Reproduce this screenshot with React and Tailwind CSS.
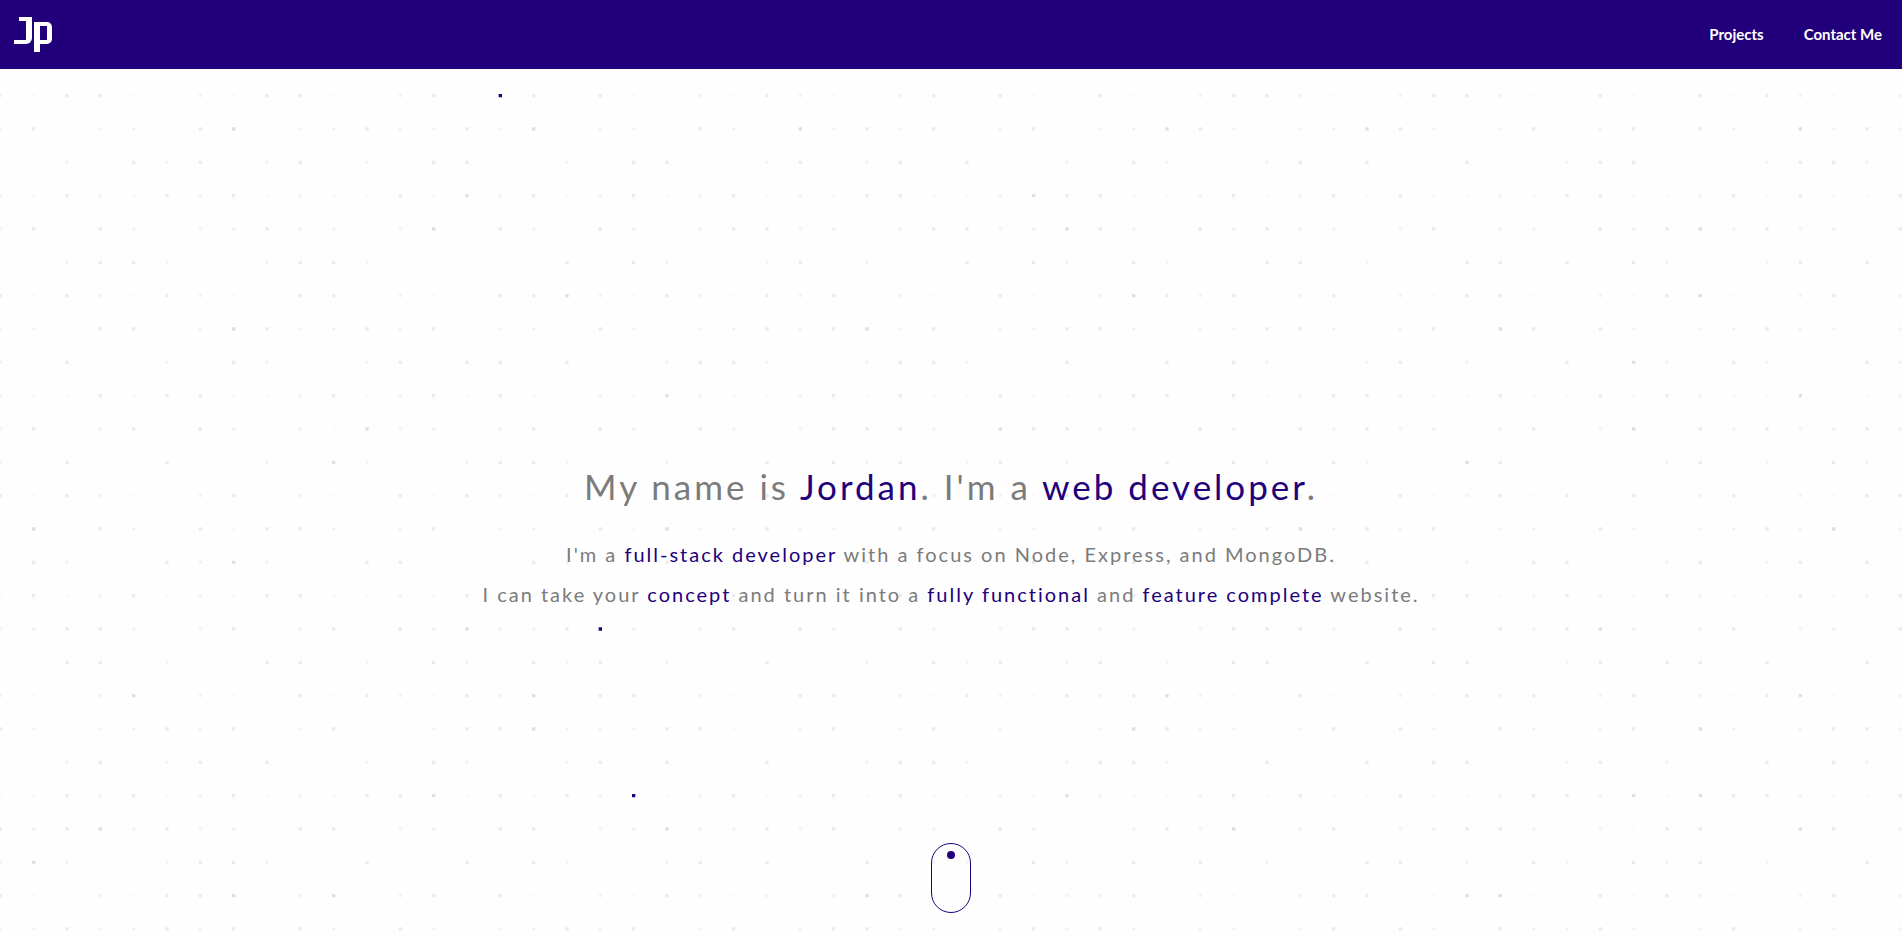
const CELL = 100 / 3;
const DOT = 10 / 3;

// One string per row of the backdrop: 0 is empty, 1-4 are shades of grey, B is an accent dot.
const ROWS = [
  "2133112133112" + "31B3131" + "1213211231311311233" + "2112332113113132112",
  "23022034022322324022" + "0320423230230224320" + "2243202302303204232",
  "00203230230203300203" + "3002302303002032002" + "3030030023300023320",
  "21321323121131423123" + "1231213311243311231" + "2313112133112313113",
  "23032022322024032032" + "0233220233224320323" + "2202302203234232203",
  "00233200233200000303" + "2002302003032032003" + "3020033030320023030",
  "31321321133121133421" + "3213231211311243231" + "2312133112134112312",
  "22033024322323022032" + "0223234230223320223" + "3202304303202232202",
  "20300203200230330300" + "2332002332003003032" + "0023020030420320032",
  "21131331123123131021" + "4211231311311233031" + "2332113113132114012",
  "23023032021422023032" + "0320233320433220320" + "3232202302403232232",
  "20300300204200233200" + "2003032302302003032" + "0320043000023020320",
  "31321123121131321321" + "1213112321213112311" + "2113123131312312133",
  "14032031332023022031" + "4223220330220330223" + "4232302203202232402",
  "03200324200330003200" + "3200203002030230002" + "0230020330023023030",
  "13123121331121311121" + "1131211311211231211" + "2112331232132113123",
  "223320230230324223B2" + "0230320320233220233" + "3203203234202302203",
  "00330200330203203230" + "2003002032302302033" + "0030330023033030030",
  "21124121131321324133" + "1211331213213234211" + "3112132312312134112",
  "32022323023002334222" + "3310230230200243220" + "2303203202304202332",
  "00230230300203200230" + "3003002332002332003" + "0030330023020030320",
  "1132312312133413132B" + "1231231311214211231" + "3113112332414332113",
  "32342322033022033022" + "4223230220320023240" + "2302233202133004302",
  "24200233200300303200" + "2303003022032030302" + "0033020320323020030",
  "31121334124123131121" + "3212124311312231211" + "2331144113132112312",
  "22322323032032022323" + "0230233220232320220" + "2303203223202302202",
];

const SHADES = [
  ["1", "fill-[#f9f9f9]"],
  ["2", "fill-[#f3f3f3]"],
  ["3", "fill-[#ebebeb]"],
  ["4", "fill-[#e0e0e0]"],
  ["B", "fill-[#22007b]"],
];

function squares(level) {
  let d = "";
  ROWS.forEach((row, r) => {
    [...row].forEach((value, c) => {
      if (value === level) {
        const x = (c * CELL - 4 / 3).toFixed(2);
        const y = (r * CELL + 25).toFixed(2);
        d += `M${x} ${y}h${DOT.toFixed(2)}v${DOT.toFixed(2)}h-${DOT.toFixed(2)}z`;
      }
    });
  });
  return d;
}

function DotField() {
  return (
    <svg aria-hidden="true" className="pointer-events-none absolute inset-0 h-full w-full">
      {SHADES.map(([level, fill]) => (
        <path key={level} className={fill} d={squares(level)} />
      ))}
    </svg>
  );
}

function Logo() {
  return (
    <a href="#top" aria-label="Jp" className="flex gap-[2px]">
      <span className="flex flex-col items-end">
        <span className="h-1 w-[13px] bg-white" />
        <span className="h-[23px] w-[18px] rounded-br-[6px] border-r-[6px] border-b-4 border-white" />
      </span>
      <span className="flex flex-col pt-[5px]">
        <span className="h-[22px] w-[18px] rounded-r-[5px] border-y-4 border-r-[5px] border-l-[6px] border-white" />
        <span className="h-2 w-[6px] bg-white" />
      </span>
    </a>
  );
}

function Accent({ children }) {
  return <span className="text-[#22007b]">{children}</span>;
}

export default function App() {
  return (
    <div
      id="top"
      className="flex min-h-screen flex-col bg-[#fefefe] font-['Lato',sans-serif] text-[#7b7b7b]"
    >
      <header className="flex h-[69px] items-center justify-between bg-[#22007b] pr-5 pl-[14px]">
        <Logo />
        <nav className="flex gap-10 pb-0.5 text-[15px] leading-5 font-bold text-white">
          <a href="#projects">Projects</a>
          <a href="#contact">Contact Me</a>
        </nav>
      </header>
      <main className="relative flex flex-1 flex-col items-center overflow-hidden">
        <DotField />
        <div className="relative flex flex-1 flex-col items-center justify-center pt-[168px] text-center">
          <h1 className="text-[35px] leading-10 tracking-[3px]">
            My name is <Accent>Jordan</Accent>. I'm a <Accent>web developer</Accent>.
          </h1>
          <div className="pt-7 text-xl leading-10 tracking-[2px]">
            <p>
              I'm a <Accent>full-stack developer</Accent> with a focus on Node, Express, and MongoDB.
            </p>
            <p>
              I can take your <Accent>concept</Accent> and turn it into a{" "}
              <Accent>fully functional</Accent> and <Accent>feature complete</Accent> website.
            </p>
          </div>
        </div>
        <a
          href="#projects"
          aria-label="Scroll down"
          className="relative mb-[23px] flex h-[70px] w-10 justify-center rounded-full border border-[#22007b] pt-[7px]"
        >
          <span className="h-2 w-2 rounded-full bg-[#22007b]" />
        </a>
      </main>
    </div>
  );
}
